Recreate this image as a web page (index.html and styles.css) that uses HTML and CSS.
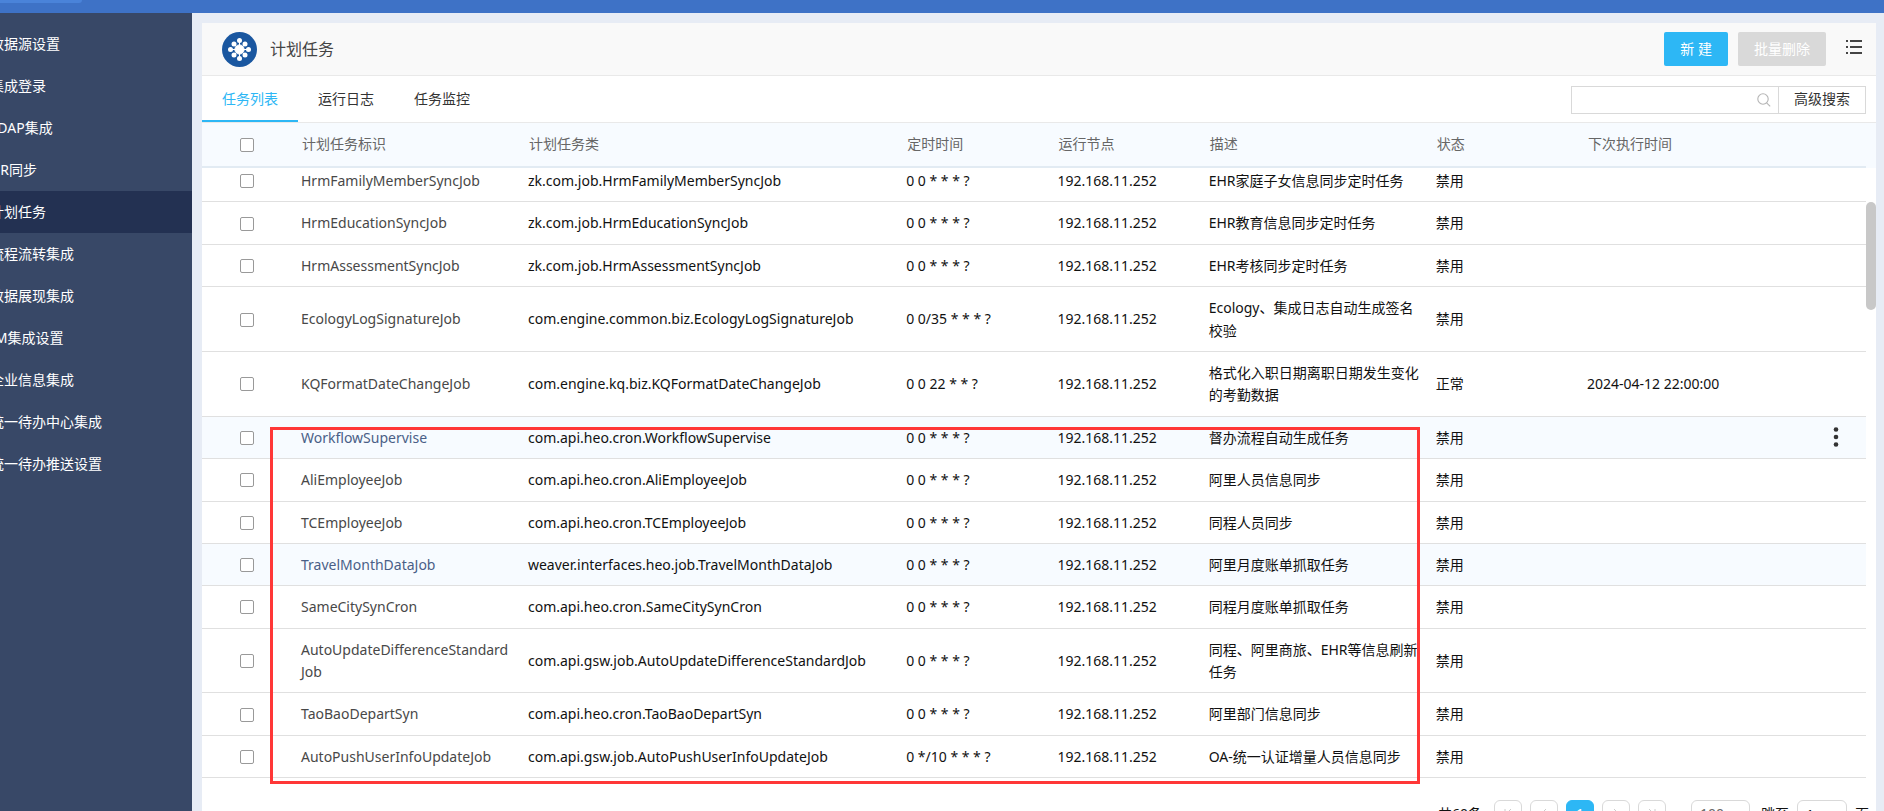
FILE: index.html
```
<!DOCTYPE html>
<html lang="zh-CN">
<head>
<meta charset="utf-8">
<title>计划任务</title>
<link rel="stylesheet" href="styles.css">
</head>
<body>
<header class="topbar"><div class="topbar-tab"></div></header>
<div class="shell">
  <nav class="sidebar">
    <ul class="menu">
      <li><a href="#">数据源设置</a></li>
      <li><a href="#">集成登录</a></li>
      <li><a href="#">LDAP集成</a></li>
      <li><a href="#">HR同步</a></li>
      <li><a href="#" class="active">计划任务</a></li>
      <li><a href="#">流程流转集成</a></li>
      <li><a href="#">数据展现集成</a></li>
      <li><a href="#">IM集成设置</a></li>
      <li><a href="#">企业信息集成</a></li>
      <li><a href="#">统一待办中心集成</a></li>
      <li><a href="#">统一待办推送设置</a></li>
    </ul>
  </nav>
  <main class="panel">
    <div class="panel-head">
      <svg class="logo" viewBox="0 0 35 35" aria-hidden="true">
        <circle cx="17.5" cy="17.5" r="17.5" fill="#1a57a0"/>
        <g fill="#fff" stroke="#fff" stroke-width="1">
          <circle cx="17.5" cy="17.5" r="4.6"/>
          <path d="M17.5 8.5v18M8.5 17.5h18M12 12l11 11M23 12l-11 11"/>
        </g>
        <g fill="#fff">
          <circle cx="17.5" cy="8.5" r="2.5"/><circle cx="17.5" cy="26.5" r="2.5"/>
          <circle cx="8.5" cy="17.5" r="2.5"/><circle cx="26.5" cy="17.5" r="2.5"/>
          <circle cx="12" cy="12" r="2.5"/><circle cx="23" cy="12" r="2.5"/>
          <circle cx="12" cy="23" r="2.5"/><circle cx="23" cy="23" r="2.5"/>
        </g>
      </svg>
      <h1 class="title">计划任务</h1>
      <div class="actions">
        <button class="btn primary" type="button">新 建</button>
        <button class="btn" type="button" disabled>批量删除</button>
        <button class="icon-btn" type="button" aria-label="菜单">
          <svg width="16" height="14" viewBox="0 0 16 14"><path d="M0 1h2M4 1h12M0 7h2M4 7h12M0 13h2M4 13h12" stroke="#444" stroke-width="2"/></svg>
        </button>
      </div>
    </div>
    <div class="toolbar">
      <div class="tabs" role="tablist">
        <button class="tab current" type="button" role="tab">任务列表</button>
        <button class="tab" type="button" role="tab">运行日志</button>
        <button class="tab" type="button" role="tab">任务监控</button>
      </div>
      <div class="search">
        <input class="search-text" type="text" aria-label="搜索">
        <button class="search-go" type="button" aria-label="搜索">
          <svg width="14" height="14" viewBox="0 0 14 14" fill="none" stroke="#b5b5b5" stroke-width="1.1"><circle cx="6" cy="6" r="5.2"/><path d="M9.6 9.8l3.6 3.6"/></svg>
        </button>
        <button class="search-more" type="button">高级搜索</button>
      </div>
    </div>
    <div class="grid-head">
      <table class="grid">
        <colgroup><col class="c-check"><col class="c-mid"><col class="c-wide"><col class="c-small"><col class="c-small"><col class="c-mid"><col class="c-small"><col class="c-small"><col></colgroup>
        <thead><tr><th><input type="checkbox" aria-label="全选"></th><th>计划任务标识</th><th>计划任务类</th><th>定时时间</th><th>运行节点</th><th>描述</th><th>状态</th><th>下次执行时间</th><th></th></tr></thead>
      </table>
    </div>
    <div class="grid-body">
      <table class="grid scrolled">
        <colgroup><col class="c-check"><col class="c-mid"><col class="c-wide"><col class="c-small"><col class="c-small"><col class="c-mid"><col class="c-small"><col class="c-small"><col></colgroup>
        <tbody>
        <tr><td><input type="checkbox" aria-label="选择"></td><td><a href="#">HrmFamilyMemberSyncJob</a></td><td>zk.com.job.HrmFamilyMemberSyncJob</td><td>0 0 * * * ?</td><td>192.168.11.252</td><td>EHR家庭子女信息同步定时任务</td><td>禁用</td><td></td><td></td></tr>
        <tr><td><input type="checkbox" aria-label="选择"></td><td><a href="#">HrmEducationSyncJob</a></td><td>zk.com.job.HrmEducationSyncJob</td><td>0 0 * * * ?</td><td>192.168.11.252</td><td>EHR教育信息同步定时任务</td><td>禁用</td><td></td><td></td></tr>
        <tr><td><input type="checkbox" aria-label="选择"></td><td><a href="#">HrmAssessmentSyncJob</a></td><td>zk.com.job.HrmAssessmentSyncJob</td><td>0 0 * * * ?</td><td>192.168.11.252</td><td>EHR考核同步定时任务</td><td>禁用</td><td></td><td></td></tr>
        <tr><td><input type="checkbox" aria-label="选择"></td><td><a href="#">EcologyLogSignatureJob</a></td><td>com.engine.common.biz.EcologyLogSignatureJob</td><td>0 0/35 * * * ?</td><td>192.168.11.252</td><td>Ecology、集成日志自动生成签名校验</td><td>禁用</td><td></td><td></td></tr>
        <tr><td><input type="checkbox" aria-label="选择"></td><td><a href="#">KQFormatDateChangeJob</a></td><td>com.engine.kq.biz.KQFormatDateChangeJob</td><td>0 0 22 * * ?</td><td>192.168.11.252</td><td>格式化入职日期离职日期发生变化的考勤数据</td><td>正常</td><td>2024-04-12 22:00:00</td><td></td></tr>
        <tr class="hot"><td><input type="checkbox" aria-label="选择"></td><td><a href="#">WorkflowSupervise</a></td><td>com.api.heo.cron.WorkflowSupervise</td><td>0 0 * * * ?</td><td>192.168.11.252</td><td>督办流程自动生成任务</td><td>禁用</td><td></td><td class="more-cell"><button class="more" type="button" aria-label="更多"><svg width="6" height="20" viewBox="0 0 6 20" fill="#333"><circle cx="3" cy="2.5" r="2.3"/><circle cx="3" cy="10" r="2.3"/><circle cx="3" cy="17.5" r="2.3"/></svg></button></td></tr>
        <tr><td><input type="checkbox" aria-label="选择"></td><td><a href="#">AliEmployeeJob</a></td><td>com.api.heo.cron.AliEmployeeJob</td><td>0 0 * * * ?</td><td>192.168.11.252</td><td>阿里人员信息同步</td><td>禁用</td><td></td><td></td></tr>
        <tr><td><input type="checkbox" aria-label="选择"></td><td><a href="#">TCEmployeeJob</a></td><td>com.api.heo.cron.TCEmployeeJob</td><td>0 0 * * * ?</td><td>192.168.11.252</td><td>同程人员同步</td><td>禁用</td><td></td><td></td></tr>
        <tr class="hot"><td><input type="checkbox" aria-label="选择"></td><td><a href="#">TravelMonthDataJob</a></td><td>weaver.interfaces.heo.job.TravelMonthDataJob</td><td>0 0 * * * ?</td><td>192.168.11.252</td><td>阿里月度账单抓取任务</td><td>禁用</td><td></td><td></td></tr>
        <tr><td><input type="checkbox" aria-label="选择"></td><td><a href="#">SameCitySynCron</a></td><td>com.api.heo.cron.SameCitySynCron</td><td>0 0 * * * ?</td><td>192.168.11.252</td><td>同程月度账单抓取任务</td><td>禁用</td><td></td><td></td></tr>
        <tr><td><input type="checkbox" aria-label="选择"></td><td><a href="#">AutoUpdateDifferenceStandard<wbr>Job</a></td><td>com.api.gsw.job.AutoUpdateDifferenceStandardJob</td><td>0 0 * * * ?</td><td>192.168.11.252</td><td>同程、阿里商旅、EHR等信息刷新任务</td><td>禁用</td><td></td><td></td></tr>
        <tr><td><input type="checkbox" aria-label="选择"></td><td><a href="#">TaoBaoDepartSyn</a></td><td>com.api.heo.cron.TaoBaoDepartSyn</td><td>0 0 * * * ?</td><td>192.168.11.252</td><td>阿里部门信息同步</td><td>禁用</td><td></td><td></td></tr>
        <tr><td><input type="checkbox" aria-label="选择"></td><td><a href="#">AutoPushUserInfoUpdateJob</a></td><td>com.api.gsw.job.AutoPushUserInfoUpdateJob</td><td>0 */10 * * * ?</td><td>192.168.11.252</td><td>OA-统一认证增量人员信息同步</td><td>禁用</td><td></td><td></td></tr>
        </tbody>
      </table>
      <div class="pager">
        <span class="total">共60条</span>
        <button type="button" disabled aria-label="首页"><svg width="12" height="12" viewBox="0 0 12 12"><path d="M3 1v10M9 1L4 6l5 5"/></svg></button>
        <button type="button" disabled aria-label="上一页"><svg width="12" height="12" viewBox="0 0 12 12"><path d="M8 1L3 6l5 5"/></svg></button>
        <button type="button" class="on">1</button>
        <button type="button" disabled aria-label="下一页"><svg width="12" height="12" viewBox="0 0 12 12"><path d="M4 1l5 5-5 5"/></svg></button>
        <button type="button" disabled aria-label="末页"><svg width="12" height="12" viewBox="0 0 12 12"><path d="M9 1v10M3 1l5 5-5 5"/></svg></button>
        <select class="size" aria-label="每页条数"><option>100</option></select>
        <label class="jump">跳至<input type="text" value="1">页</label>
      </div>
      <div class="thumb"></div>
      <div class="mark"></div>
    </div>
  </main>
</div>
</body>
</html>
```
FILE: styles.css
```
* { box-sizing: border-box; }

body {
  margin: 0;
  height: 100vh;
  overflow: hidden;
  display: flex;
  flex-direction: column;
  background: #e7ecf5;
  color: #111;
  font: 14px/1.6 "Noto Sans", "Noto Sans CJK SC", sans-serif;
}

button, input, select { font: inherit; color: inherit; }
button { border: 0; padding: 0; background: none; }
a { color: inherit; text-decoration: none; }

.topbar { flex: none; height: 13px; background: #3e72c6; }
.topbar-tab { width: 82px; height: 3px; background: #4a83d9; border-bottom-right-radius: 3px; }

.shell { flex: 1; min-height: 0; display: flex; }

.sidebar { flex: none; width: 192px; padding-top: 10px; background: #384867; overflow: hidden; }
.menu { list-style: none; margin: 0 0 0 -40px; padding: 0; }
.menu a { display: block; padding-left: 30px; line-height: 42px; color: #fff; white-space: nowrap; }
.menu .active { background: #233152; }

.panel {
  flex: 1;
  min-width: 0;
  margin: 10px 8px 0 10px;
  display: flex;
  flex-direction: column;
  background: #fff;
}

.panel-head {
  flex: none;
  height: 53px;
  display: flex;
  align-items: center;
  padding: 0 14px 0 20px;
  background: #f9f9f9;
  border-bottom: 1px solid #e9e9e9;
}
.logo { width: 35px; height: 35px; }
.title { margin: 0 0 0 13px; padding-top: 2px; font-size: 16px; font-weight: 400; color: #444; }
.actions { margin-left: auto; display: flex; align-items: center; gap: 10px; }
.btn { height: 34px; padding: 0 16px; border-radius: 2px; background: #d9d9d9; color: #fff; }
.primary { background: #2db7f5; }
.icon-btn { display: flex; margin: 0 0 4px 10px; }

.toolbar {
  flex: none;
  height: 47px;
  display: flex;
  justify-content: space-between;
  align-items: center;
  padding-right: 10px;
  border-bottom: 1px solid #e9e9e9;
}
.tabs { display: flex; align-self: stretch; }
.tab { padding: 2px 20px 0; border-bottom: 2px solid transparent; color: #333; }
.current { color: #2db7f5; border-color: #2db7f5; }
.search { display: flex; height: 28px; margin-top: 1px; border: 1px solid #d9d9d9; }
.search-text { width: 184px; border: 0; padding: 0 8px; outline: 0; background: none; }
.search-go { display: flex; align-items: center; width: 22px; padding-left: 1px; }
.search-more { padding: 0 15px; border-left: 1px solid #d9d9d9; color: #333; }

.grid { width: 100%; table-layout: fixed; border-collapse: separate; border-spacing: 0; }
.grid th, .grid td { padding: 10px 8px 9px; text-align: left; font-weight: 400; }
.grid th { height: 45px; padding: 0 9px; border-bottom: 2px solid #e2ebf3; color: #666; }
.grid td { border-bottom: 1px solid #e0e0e0; }
.grid tr > :first-child { padding-left: 38px; }
.grid td:nth-child(2) { color: #484848; }
.c-check { width: 91px; }
.c-small { width: 9.09%; }
.c-mid { width: 13.64%; }
.c-wide { width: 22.73%; }
.hot { background: #f7fbff; }
.hot td:nth-child(2) { color: #4a5f87; }

.grid input {
  display: block;
  appearance: none;
  width: 14px;
  height: 14px;
  margin: 0;
  border: 1px solid #999;
  border-radius: 2px;
  background: #fff;
}

.grid-head { flex: none; padding-right: 10px; background: #f7fbff; }
.grid-body { flex: 1; min-height: 0; position: relative; overflow: hidden; }
.scrolled { width: calc(100% - 10px); margin-top: -8px; }
.more { display: flex; margin-left: auto; }
.grid .more-cell { padding: 0 27px 0 0; }

.thumb {
  position: absolute;
  top: 34px;
  right: 0;
  width: 10px;
  height: 108px;
  border-radius: 5px;
  background: #c8c8c8;
}
.mark {
  position: absolute;
  top: 259px;
  left: 68px;
  right: 456px;
  height: 357px;
  border: 3px solid #ff3737;
}

.pager { display: flex; justify-content: flex-end; align-items: center; gap: 8px; padding: 22px 7px 0 0; }
.pager button {
  width: 28px;
  height: 28px;
  display: flex;
  justify-content: center;
  align-items: center;
  border: 1px solid #d9d9d9;
  border-radius: 6px;
}
.pager svg { fill: none; stroke: #ccc; }
.pager .on { background: #2db7f5; border-color: #2db7f5; color: #fff; }
.total { margin-right: 4px; }
.size { width: 59px; height: 28px; margin-left: 17px; padding: 0 8px; appearance: none; border: 1px solid #d9d9d9; border-radius: 6px; background: #fff; color: #666; }
.jump { display: flex; align-items: center; gap: 8px; margin-left: 3px; }
.jump input { width: 50px; height: 28px; padding: 0 8px; border: 1px solid #d9d9d9; border-radius: 6px; }
```
